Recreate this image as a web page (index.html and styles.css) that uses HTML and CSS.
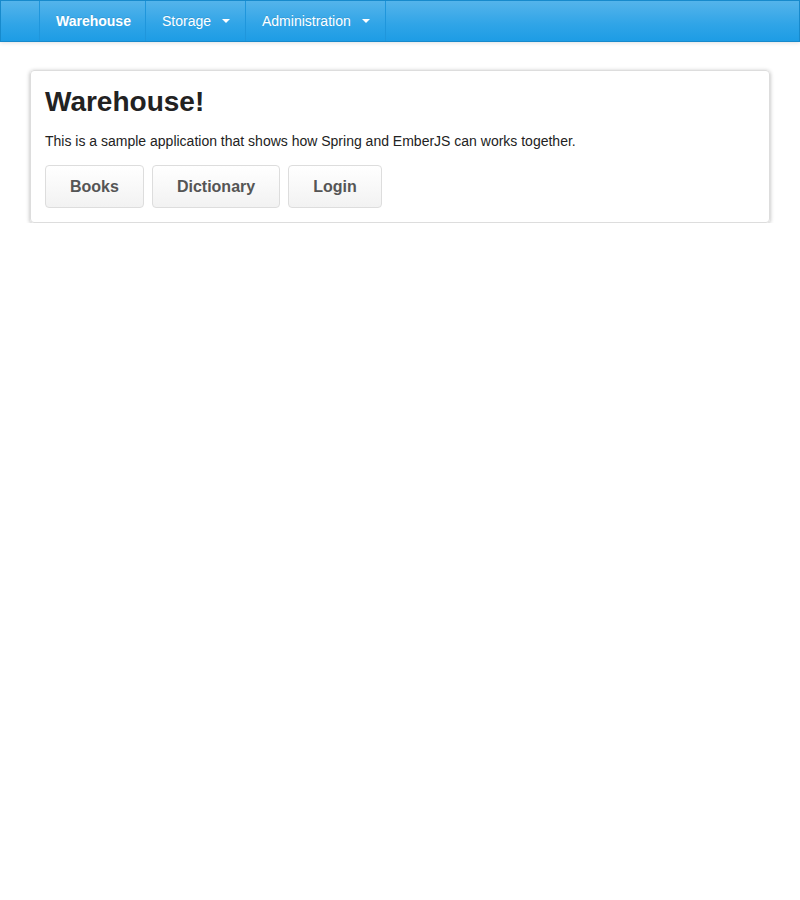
FILE: index.html
```html
<!DOCTYPE html>
<html>
<head>
<meta charset="utf-8">
<link rel="stylesheet" href="styles.css">
</head>
<body>
<div class="navbar">
  <ul class="nav">
    <li><a class="brand" href="#">Warehouse</a></li>
    <li><a href="#">Storage <span class="caret"></span></a></li>
    <li><a href="#">Administration <span class="caret"></span></a></li>
  </ul>
</div>
<div class="container">
  <div class="hero">
    <h1>Warehouse!</h1>
    <p>This is a sample application that shows how Spring and EmberJS can works together.</p>
    <div class="actions">
      <a class="btn" href="#">Books</a>
      <a class="btn" href="#">Dictionary</a>
      <a class="btn" href="#">Login</a>
    </div>
  </div>
</div>
</body>
</html>
```
FILE: styles.css
```css
html, body { margin: 0; padding: 0; background: #fff; }
body { font-family: "Liberation Sans", Arial, sans-serif; font-size: 14px; color: #333; }
.navbar {
  height: 40px;
  border: 1px solid #178acc;
  background: linear-gradient(to bottom, #54b4eb, #2fa4e7 60%, #1d9ce5);
  box-shadow: 0 1px 4px rgba(0,0,0,0.12);
  padding-left: 38px;
}
.nav { list-style: none; margin: 0; padding: 0; display: flex; height: 40px; }
.nav li { border-right: 1px solid #1f96dc; }
.nav li:first-child { border-left: 1px solid #1f96dc; }
.nav a {
  display: flex; align-items: center; height: 40px;
  padding: 0 15px 0 16px; color: #fff; text-decoration: none; font-size: 14px;
  text-shadow: 0 -1px 0 rgba(0,0,0,0.1);
}
.nav a.brand { font-weight: bold; padding: 0 14px 0 16px; }
.caret {
  display: inline-block; width: 0; height: 0; margin-left: 11px;
  border-left: 4px solid transparent; border-right: 4px solid transparent;
  border-top: 4px solid #fff;
}
.container { padding: 28px 30px 0; }
.hero {
  border: 1px solid #ddd; border-radius: 4px;
  box-shadow: 0 1px 4px rgba(0,0,0,0.3);
  padding: 14px 14px 14px;
}
.hero h1 { margin: 0; font-size: 28px; line-height: 34px; font-weight: bold; color: #222; }
.hero p { margin: 12px 0 14px; font-size: 14px; line-height: 20px; color: #222; }
.actions { display: flex; gap: 8px; }
.btn {
  display: block; padding: 11px 24px; line-height: 19px; font-size: 16px; font-weight: bold;
  color: #555; text-decoration: none; border: 1px solid #ddd; border-radius: 4px;
  background: linear-gradient(to bottom, #fff, #f2f2f2);
}
```
